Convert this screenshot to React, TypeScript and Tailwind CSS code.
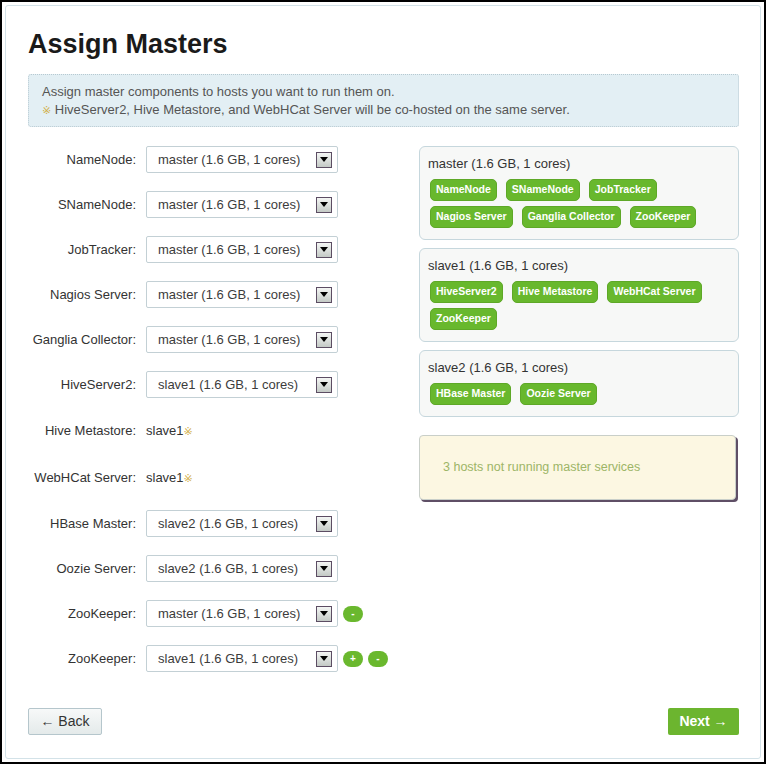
const hostOpt = (h: string) => `${h} (1.6 GB, 1 cores)`;

type Row = { label: string; host: string; fixed?: boolean; add?: boolean; remove?: boolean };

const rows: Row[] = [
  { label: 'NameNode', host: 'master' },
  { label: 'SNameNode', host: 'master' },
  { label: 'JobTracker', host: 'master' },
  { label: 'Nagios Server', host: 'master' },
  { label: 'Ganglia Collector', host: 'master' },
  { label: 'HiveServer2', host: 'slave1' },
  { label: 'Hive Metastore', host: 'slave1', fixed: true },
  { label: 'WebHCat Server', host: 'slave1', fixed: true },
  { label: 'HBase Master', host: 'slave2' },
  { label: 'Oozie Server', host: 'slave2' },
  { label: 'ZooKeeper', host: 'master', remove: true },
  { label: 'ZooKeeper', host: 'slave1', add: true, remove: true },
];

const hosts = [
  { name: 'master', services: ['NameNode', 'SNameNode', 'JobTracker', 'Nagios Server', 'Ganglia Collector', 'ZooKeeper'] },
  { name: 'slave1', services: ['HiveServer2', 'Hive Metastore', 'WebHCat Server', 'ZooKeeper'] },
  { name: 'slave2', services: ['HBase Master', 'Oozie Server'] },
];

function Select({ value }: { value: string }) {
  return (
    <div className="w-[192px] h-[27px] border border-[#c3d0d5] rounded-[2px] bg-white flex items-center justify-between pl-[11px] pr-[5px]">
      <span className="text-[13px] text-[#3c3c3c]">{value}</span>
      <span className="w-[16px] h-[16px] border border-[#5c4d63] bg-gradient-to-b from-[#f4f6f4] to-[#c4cac6] flex items-center justify-center">
        <span className="w-0 h-0 border-l-[4px] border-r-[4px] border-t-[5px] border-l-transparent border-r-transparent border-t-black" />
      </span>
    </div>
  );
}

function PillBtn({ sign }: { sign: string }) {
  return (
    <span className="w-[20px] h-[16px] rounded-full bg-[#6ab82e] text-white text-[10px] font-bold leading-none flex items-center justify-center">
      {sign}
    </span>
  );
}

export default function App() {
  return (
    <div className="w-[766px] h-[764px] bg-white border-2 border-black p-[3px] font-['Liberation_Sans',Arial,sans-serif] overflow-hidden">
      <div className="h-full border border-[#d3e2e8] rounded-[3px] pt-[23px] pl-[22px] pr-[21px]">
        <h1 className="text-[27px] leading-[31px] font-bold text-[#1a1a1a]">Assign Masters</h1>

        {/* Info banner */}
        <div className="mt-[14px] h-[53px] bg-[#e3eff4] border border-dotted border-[#b7c9d1] rounded-[3px] pl-[13px] pt-[8px] text-[13px] leading-[18px] text-[#555]">
          <p>Assign master components to hosts you want to run them on.</p>
          <p>
            <span className="text-[#d2b04c] font-['DejaVu_Sans',sans-serif] text-[11px]">※</span> HiveServer2, Hive Metastore, and WebHCat Server will be co-hosted on the same server.
          </p>
        </div>

        <div className="mt-[19px] flex">
          {/* Left form */}
          <div className="flex-1 flex flex-col">
            {rows.map((r, i) => (
              <div key={i} className={`flex items-center mb-[18px] ${r.fixed ? 'h-[29px]' : 'h-[27px]'}`}>
                <label className="w-[108px] text-right text-[13px] text-[#333]">{r.label}:</label>
                <div className="ml-[10px] flex items-center gap-[5px]">
                  {r.fixed ? (
                    <span className="text-[13px] text-[#333]">
                      {r.host}
                      <span className="text-[#d2b04c] font-['DejaVu_Sans',sans-serif] text-[11px]">※</span>
                    </span>
                  ) : (
                    <Select value={hostOpt(r.host)} />
                  )}
                  {r.add && <PillBtn sign="+" />}
                  {r.remove && <PillBtn sign="-" />}
                </div>
              </div>
            ))}
          </div>

          {/* Right host summary */}
          <div className="w-[320px] flex flex-col">
            {hosts.map((h, i) => (
              <div key={h.name} className={`border border-[#c6d7dd] rounded-[6px] bg-[#f7f8f7] pt-[8px] px-[10px] pb-[11px] ${i < 2 ? 'mb-[8px]' : 'mb-[18px]'}`}>
                <div className="text-[13px] leading-[18px] text-[#333] -ml-[2px]">{hostOpt(h.name)}</div>
                <div className="mt-[6px] flex flex-wrap gap-x-[9px] gap-y-[5px]">
                  {h.services.map((s) => (
                    <span key={s} className="h-[22px] px-[5px] rounded-[5px] bg-[#68b82d] border border-[#5ea827] text-white text-[10.5px] font-bold flex items-center">
                      {s}
                    </span>
                  ))}
                </div>
              </div>
            ))}
            <div className="h-[65px] w-[317px] bg-[#fcf7e2] border border-[#c9cfc9] rounded-[4px] shadow-[2px_2px_0_#5f4f66] flex items-center pl-[23px]">
              <span className="text-[12.5px] text-[#9db567]">3 hosts not running master services</span>
            </div>
          </div>
        </div>

        {/* Footer buttons */}
        <div className="mt-[18px] flex justify-between">
          <button className="w-[74px] h-[27px] border border-[#b5c6cc] rounded-[2px] bg-gradient-to-b from-[#f7f9f9] to-[#e4eaea] text-[14px] text-[#333]">
            ← Back
          </button>
          <button className="w-[71px] h-[27px] rounded-[2px] bg-[#6cb52f] text-[14px] font-bold text-white">
            Next →
          </button>
        </div>
      </div>
    </div>
  );
}
